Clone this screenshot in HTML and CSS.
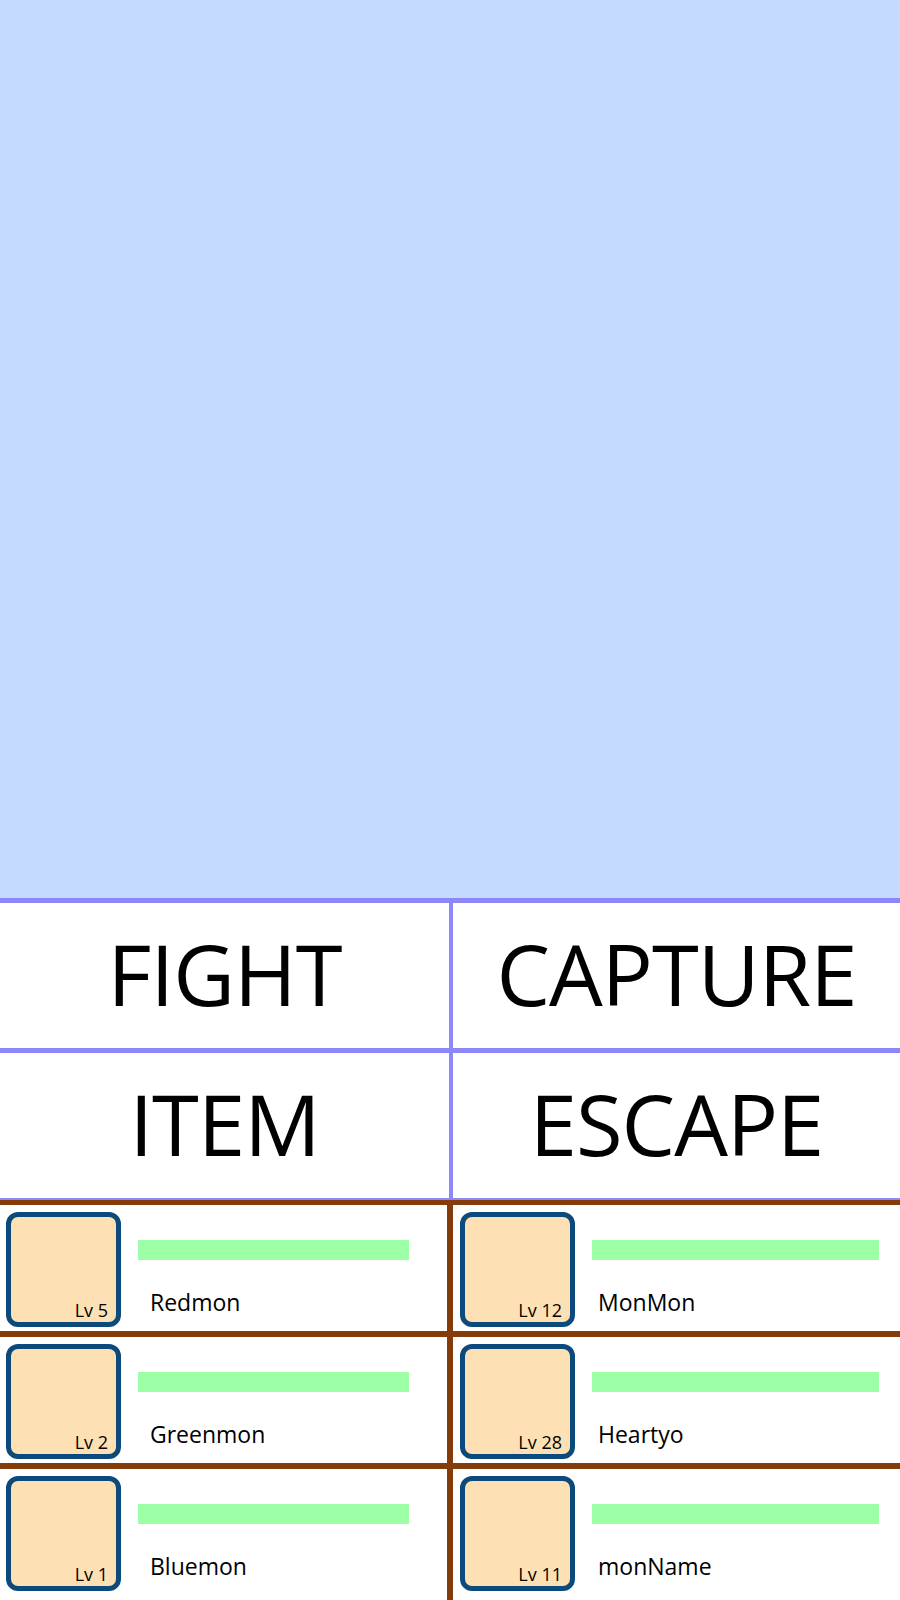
FILE: index.html
```html
<!DOCTYPE html>
<html lang="en">
<head>
<meta charset="utf-8">
<title>Battle</title>
<link rel="stylesheet" href="styles.css">
</head>
<body>
<div class="screen">
  <div class="sky"></div>
  <div class="menu">
    <div class="action">FIGHT</div>
    <div class="action">CAPTURE</div>
    <div class="action">ITEM</div>
    <div class="action">ESCAPE</div>
  </div>
  <div class="party">
    <div class="mon">
      <div class="portrait"><span class="lv">Lv 5</span></div>
      <div class="info"><div class="hp"></div><div class="name">Redmon</div></div>
    </div>
    <div class="mon">
      <div class="portrait"><span class="lv">Lv 12</span></div>
      <div class="info"><div class="hp"></div><div class="name">MonMon</div></div>
    </div>
    <div class="mon">
      <div class="portrait"><span class="lv">Lv 2</span></div>
      <div class="info"><div class="hp"></div><div class="name">Greenmon</div></div>
    </div>
    <div class="mon">
      <div class="portrait"><span class="lv">Lv 28</span></div>
      <div class="info"><div class="hp"></div><div class="name">Heartyo</div></div>
    </div>
    <div class="mon">
      <div class="portrait"><span class="lv">Lv 1</span></div>
      <div class="info"><div class="hp"></div><div class="name">Bluemon</div></div>
    </div>
    <div class="mon">
      <div class="portrait"><span class="lv">Lv 11</span></div>
      <div class="info"><div class="hp"></div><div class="name">monName</div></div>
    </div>
  </div>
</div>
</body>
</html>
```
FILE: styles.css
```css
html, body {
  margin: 0;
  padding: 0;
  background: #ffffff;
}
body {
  font-family: "Open Sans", "Noto Sans", sans-serif;
  color: #000;
}
.screen {
  width: 900px;
  height: 1600px;
  overflow: hidden;
  display: flex;
  flex-direction: column;
}
.sky {
  height: 898px;
  background: #c4dbff;
  flex: none;
}
.menu {
  flex: none;
  display: grid;
  grid-template-columns: 449px 1fr;
  grid-template-rows: 145px 145px;
  column-gap: 4px;
  row-gap: 5px;
  padding: 5px 0 2px;
  background: #8e87f7;
}
.action {
  background: #fff;
  display: flex;
  align-items: center;
  justify-content: center;
  font-size: 85px;
  line-height: 1;
  letter-spacing: -1px;
  padding-bottom: 5px;
  box-sizing: border-box;
}
.party {
  flex: 1;
  display: grid;
  grid-template-columns: 447px 1fr;
  grid-template-rows: 126px 126px 131px;
  column-gap: 6px;
  row-gap: 6px;
  padding-top: 5px;
  background: #843c0b;
}
.mon {
  background: #fff;
  display: flex;
  align-items: flex-start;
  padding: 7px 0 0 6px;
  box-sizing: border-box;
}
.mon:nth-child(even) {
  padding-left: 7px;
}
.portrait {
  flex: none;
  width: 115px;
  height: 115px;
  box-sizing: border-box;
  border: 5px solid #0c4a7e;
  border-radius: 12px;
  background: #fee0b5;
  display: flex;
  align-items: flex-end;
  justify-content: flex-end;
  padding: 0 8px 3px 0;
}
.lv {
  font-size: 18px;
  line-height: 18px;
}
.info {
  flex: 1;
  display: flex;
  flex-direction: column;
  padding-top: 28px;
  margin-left: 17px;
  margin-right: 38px;
}
.mon:nth-child(even) .info {
  margin-right: 21px;
}
.hp {
  height: 20px;
  background: #9cffa6;
}
.name {
  margin-top: 28px;
  margin-left: 12px;
  font-size: 23px;
  line-height: 28px;
}
.mon:nth-child(even) .name {
  margin-left: 6px;
}
```
